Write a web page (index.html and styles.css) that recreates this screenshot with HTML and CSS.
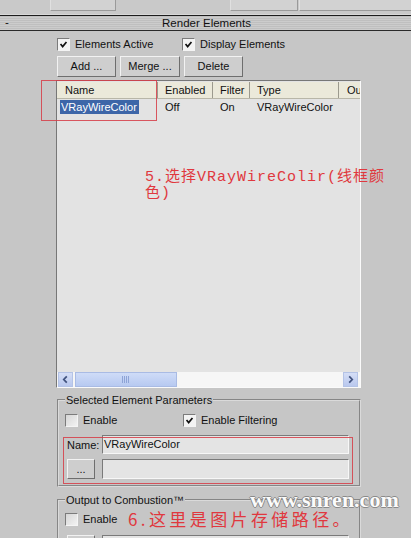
FILE: index.html
```html
<!DOCTYPE html>
<html>
<head>
<meta charset="utf-8">
<title>Render Elements</title>
<link rel="stylesheet" href="styles.css">
</head>
<body>
<div class="screen">
  <div class="topstrip">
    <span class="tab t1"></span>
    <span class="tab t2"></span>
    <span class="tab t3"></span>
  </div>
  <div class="rollhead">
    <span class="minus">-</span>
    <span class="title">Render Elements</span>
  </div>
  <div class="panel">
    <div class="checks">
      <label class="chk first"><span class="box on"><svg viewBox="0 0 13 13"><path d="M3 6 L5.5 9 L10 3.5" /></svg></span>Elements Active</label>
      <label class="chk"><span class="box on"><svg viewBox="0 0 13 13"><path d="M3 6 L5.5 9 L10 3.5" /></svg></span>Display Elements</label>
    </div>
    <div class="btns">
      <button class="btn b-add">Add ...</button>
      <button class="btn b-merge">Merge ...</button>
      <button class="btn b-del">Delete</button>
    </div>
    <div class="list">
      <div class="lhead">
        <div class="c c1">Name</div>
        <div class="c c2">Enabled</div>
        <div class="c c3">Filter</div>
        <div class="c c4">Type</div>
        <div class="c c5">Ou</div>
      </div>
      <div class="lrow">
        <div class="c c1"><span class="sel">VRayWireColor</span></div>
        <div class="c c2">Off</div>
        <div class="c c3">On</div>
        <div class="c c4">VRayWireColor</div>
        <div class="c c5"></div>
      </div>
      <div class="lfill"></div>
      <div class="hscroll">
        <span class="arrow"><svg viewBox="0 0 15 15"><path d="M9 4 L5.5 7.5 L9 11" /></svg></span>
        <span class="thumb"><span class="grip"></span></span>
        <span class="track"></span>
        <span class="arrow"><svg viewBox="0 0 15 15"><path d="M6 4 L9.5 7.5 L6 11" /></svg></span>
      </div>
    </div>
    <fieldset class="grp g1">
      <legend>Selected Element Parameters</legend>
      <div class="checks inner">
        <label class="chk first2"><span class="box"></span>Enable</label>
        <label class="chk"><span class="box on"><svg viewBox="0 0 13 13"><path d="M3 6 L5.5 9 L10 3.5" /></svg></span>Enable Filtering</label>
      </div>
      <div class="frow name-row">
        <span class="flabel">Name:</span>
        <span class="field">VRayWireColor</span>
      </div>
      <div class="frow path-row">
        <button class="btn dots">...</button>
        <span class="field"></span>
      </div>
    </fieldset>
    <fieldset class="grp g2">
      <legend>Output to Combustion™</legend>
      <div class="checks inner">
        <label class="chk first2"><span class="box"></span>Enable</label>
      </div>
      <div class="frow path-row low">
        <button class="btn dots"></button>
        <span class="field"></span>
      </div>
    </fieldset>
  </div>

  <div class="mark box1"></div>
  <div class="mark box2"></div>
  <div class="note n5">5.选择VRayWireColir(线框颜<br>色)</div>
  <div class="note n6">6.这里是图片存储路径。</div>
  <div class="wm">www.snren.com</div>
</div>
</body>
</html>
```

FILE: styles.css
```css
html, body {
  margin: 0;
  padding: 0;
}
body {
  background: #c6c6c6;
  font-family: "Liberation Sans", Arial, sans-serif;
  font-size: 11px;
  color: #111;
}
.screen {
  position: relative;
  width: 411px;
  height: 538px;
  overflow: hidden;
  background: #c6c6c6;
}
.topstrip {
  position: relative;
  height: 15px;
  background: #c9c9c9;
  box-sizing: border-box;
  border-bottom: 1px solid #d8d8d8;
}
.tab {
  position: absolute;
  top: 0;
  height: 10px;
  border-bottom: 1px solid #9a9a9a;
  border-left: 1px solid #e0e0e0;
  border-right: 1px solid #9a9a9a;
  background: #d2d2d2;
}
.t1 { left: 50px; width: 64px; }
.t2 { left: 230px; width: 66px; }
.t3 { left: 299px; width: 112px; }

.rollhead {
  height: 14px;
  border-top: 1px solid #1c1c1c;
  border-bottom: 1px solid #2a2a2a;
  background: repeating-linear-gradient(to bottom, #bfbfbf 0, #bfbfbf 1px, #cccccc 1px, #cccccc 2px);
  display: flex;
  align-items: center;
  position: relative;
  line-height: 14px;
  font-size: 11.5px;
}
.minus {
  position: absolute;
  left: 5px;
  top: -1px;
}
.title {
  flex: 1;
  text-align: center;
  padding-left: 2px;
}

.panel {
  padding: 7px 0 0 56px;
}
.checks {
  display: flex;
  align-items: center;
  height: 13px;
}
.chk {
  display: flex;
  align-items: center;
  gap: 5px;
  line-height: 13px;
  white-space: nowrap;
}
.chk.first {
  margin-left: 1px;
  width: 125px;
}
.box {
  width: 13px;
  height: 13px;
  box-sizing: border-box;
  border-top: 1px solid #7b7b7b;
  border-left: 1px solid #7b7b7b;
  border-right: 1px solid #f4f4f4;
  border-bottom: 1px solid #f4f4f4;
  background: linear-gradient(135deg, #d6d6d6, #f2f2f2);
  display: inline-block;
  flex: none;
}
.box.on {
  background: #f3f3f3;
}
.box svg {
  display: block;
  width: 11px;
  height: 11px;
}
.box path {
  fill: none;
  stroke: #111;
  stroke-width: 2;
}

.btns {
  display: flex;
  margin-top: 5px;
  margin-left: 1px;
  gap: 4px;
}
.btn {
  font: inherit;
  color: #111;
  height: 21px;
  padding: 0;
  box-sizing: border-box;
  background: #cecece;
  border-top: 1px solid #f2f2f2;
  border-left: 1px solid #f2f2f2;
  border-right: 1px solid #6e6e6e;
  border-bottom: 1px solid #6e6e6e;
  line-height: 19px;
  text-align: center;
}
.b-add { width: 59px; }
.b-merge { width: 60px; }
.b-del { width: 59px; }

.list {
  margin-top: 3px;
  width: 305px;
  height: 308px;
  box-sizing: border-box;
  border-top: 1px solid #777;
  border-left: 1px solid #777;
  border-right: 1px solid #fafafa;
  border-bottom: 1px solid #fafafa;
  background: #e3e3e3;
  display: flex;
  flex-direction: column;
}
.lhead {
  margin-top: 1px;
  height: 16px;
  display: flex;
  background: #ebe9da;
  border-bottom: 1px solid #b8b6a8;
  line-height: 16px;
}
.lhead .c {
  border-right: 1px solid #9c9a8e;
}
.lhead .c5 { border-right: none; }
.c {
  box-sizing: border-box;
  padding-left: 7px;
  white-space: nowrap;
  overflow: hidden;
  flex: none;
}
.c1 { width: 101px; padding-left: 8px; }
.c2 { width: 55px; }
.c3 { width: 37px; }
.c4 { width: 89px; }
.c5 { flex: 1; padding-left: 8px; }
.lrow {
  display: flex;
  height: 15px;
  margin-top: 1px;
  line-height: 15px;
}
.lrow .c1 { padding-left: 3px; }
.sel {
  background: #3d66a8;
  color: #fff;
  padding: 0 2px 0 1px;
  display: inline-block;
  line-height: 14px;
}
.lfill { flex: 1; }
.hscroll {
  height: 15px;
  display: flex;
  gap: 2px;
  padding: 0 2px 0 1px;
  background: #f6f6f6;
}
.arrow {
  width: 15px;
  height: 15px;
  box-sizing: border-box;
  background: linear-gradient(to bottom, #d5def6, #b9c8ee);
  border: 1px solid #b4c3e6;
  flex: none;
}
.arrow svg {
  display: block;
  width: 13px;
  height: 13px;
}
.arrow path {
  fill: none;
  stroke: #41527e;
  stroke-width: 2;
}
.thumb {
  width: 102px;
  height: 15px;
  box-sizing: border-box;
  background: linear-gradient(to bottom, #cfdcf7, #b7c9f1);
  border: 1px solid #a9bbe4;
  display: flex;
  align-items: center;
  justify-content: center;
  flex: none;
}
.grip {
  width: 8px;
  height: 7px;
  background: repeating-linear-gradient(to right, #8ea4d6 0, #8ea4d6 1px, transparent 1px, transparent 2px);
}
.track { flex: 1; }

.grp {
  margin: 5px 0 0 1px;
  padding: 0 6px 6px 6px;
  width: 304px;
  box-sizing: border-box;
  border: 2px groove #dadada;
  min-width: 0;
}
.grp legend {
  padding: 0 1px;
  line-height: 14px;
  margin-left: 0;
}
.checks.inner {
  margin-top: 7px;
}
.chk.first2 {
  width: 118px;
}
.frow {
  display: flex;
  align-items: center;
}
.name-row {
  margin-top: 8px;
  height: 19px;
}
.flabel {
  margin-left: 2px;
  width: 35px;
  flex: none;
}
.field {
  width: 247px;
  height: 19px;
  box-sizing: border-box;
  background: #e4e4e4;
  border-top: 1px solid #7a7a7a;
  border-left: 1px solid #7a7a7a;
  border-right: 1px solid #f7f7f7;
  border-bottom: 1px solid #f7f7f7;
  line-height: 16px;
  padding-left: 1px;
  flex: none;
}
.path-row {
  margin-top: 5px;
  height: 20px;
}
.path-row .field { height: 20px; }
.dots {
  width: 28px;
  height: 20px;
  margin-left: 2px;
  margin-right: 7px;
  line-height: 16px;
}
.g2 {
  margin-top: 6px;
  height: 60px;
}
.g2 .checks.inner { margin-top: 6px; }
.low { margin-top: 9px; }

.mark {
  position: absolute;
  border: 1.5px solid rgba(214, 60, 70, 0.85);
  box-sizing: border-box;
}
.box1 { left: 41px; top: 80px; width: 116px; height: 41px; }
.box2 { left: 63px; top: 437px; width: 290px; height: 47px; }

.note {
  position: absolute;
  color: #e0383e;
  white-space: nowrap;
}
.n5 {
  left: 145px;
  top: 170px;
  font-family: "Liberation Mono", "Noto Sans CJK SC", monospace;
  font-size: 15px;
  line-height: 16px;
  letter-spacing: 1px;
}
.n6 {
  left: 128px;
  top: 509px;
  font-family: "Noto Sans CJK SC", sans-serif;
  font-size: 17px;
  line-height: 20px;
  letter-spacing: 3.4px;
}
.wm {
  position: absolute;
  left: 250px;
  top: 488px;
  font-family: "Liberation Serif", serif;
  font-weight: bold;
  font-size: 22px;
  line-height: 24px;
  color: #fbfbfb;
  text-shadow: 1px 0 #8a8a8a, -1px 0 #8a8a8a, 0 1px #8a8a8a, 0 -1px #8a8a8a;
}
```
